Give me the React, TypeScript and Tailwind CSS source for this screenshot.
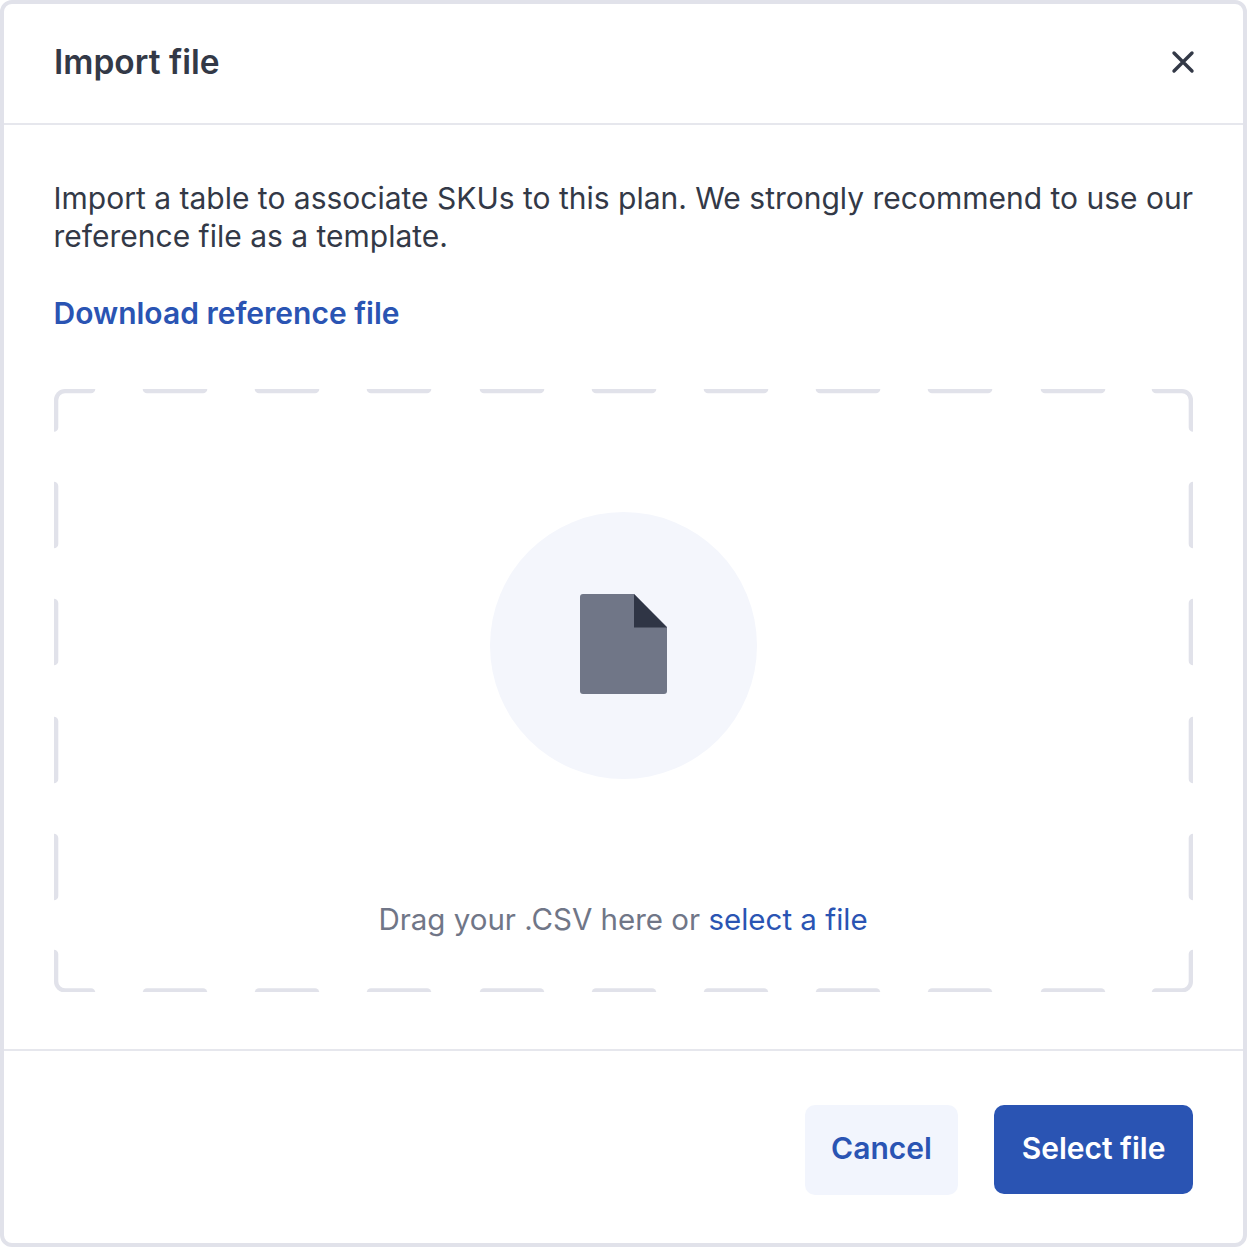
const topDashes = [142, 254, 366, 479, 591, 703, 815, 927, 1040];
const sideDashes = [482, 599, 717, 834];

// Dashed outline of the drop zone. Strokes sit on the edge and the outer half gets clipped,
// which gives the flat outside / rounded inside dash ends of the reference.
function DashedOutline() {
  const w = 1139;
  const h = 603.5;
  return (
    <svg className="absolute inset-0" width={w} height={h} viewBox={`0 0 ${w} ${h}`} fill="none" stroke="#e1e2ea" strokeWidth="8.6" strokeLinecap="round">
      <defs>
        <clipPath id="zone-edge">
          <rect width={w} height={h} rx="11" />
        </clipPath>
      </defs>
      <g clipPath="url(#zone-edge)">
        <path d="M0 38.500V11a11 11 0 0 1 11-11H37" />
        <path d={`M${w} 38.500V11a11 11 0 0 0-11-11H${w - 37}`} />
        <path d={`M0 ${h - 38.5}V${h - 11}a11 11 0 0 0 11 11H37`} />
        <path d={`M${w} ${h - 38.5}V${h - 11}a11 11 0 0 1-11 11H${w - 37}`} />
        {topDashes.map((x) => (
          <g key={x}>
            <line x1={x - 49} y1="0" x2={x + 7} y2="0" />
            <line x1={x - 49} y1={h} x2={x + 7} y2={h} />
          </g>
        ))}
        {sideDashes.map((y) => (
          <g key={y}>
            <line x1="0" y1={y - 385} x2="0" y2={y - 327} />
            <line x1={w} y1={y - 385} x2={w} y2={y - 327} />
          </g>
        ))}
      </g>
    </svg>
  );
}

function FileIcon() {
  return (
    <svg width="88" height="102" viewBox="0 0 88 102">
      <path d="M3 1H54L87 34V98a3 3 0 0 1-3 3H3a3 3 0 0 1-3-3V4a3 3 0 0 1 3-3Z" fill="#707687" />
      <path d="M54 1L87 34.500H54Z" fill="#2f3545" />
    </svg>
  );
}

export default function App() {
  return (
    <div className="w-[1247px] h-[1247px] bg-white border-[4.5px] border-[#e1e2ea] rounded-[12px] flex flex-col text-[#333947] font-['Inter',sans-serif]">
      {/* Header */}
      <div className="h-[120.5px] shrink-0 flex items-center justify-between pl-[50px] pr-[48px] pb-[3px] border-b-[2.5px] border-[#e6e7ed]">
        <h1 className="mt-[2px] text-[33.500px] font-semibold leading-none">Import file</h1>
        <svg width="24" height="24" viewBox="0 0 24 24" fill="none" stroke="#333947" strokeWidth="3.4" strokeLinecap="round">
          <path d="M3 3L21 21M21 3L3 21" />
        </svg>
      </div>

      {/* Body */}
      <div className="h-[926.5px] shrink-0 pl-[49.500px] border-b-[2.5px] border-[#e6e7ed]">
        <p className="mt-[54px] w-[1145px] text-[30px] leading-[38px]">
          Import a table to associate SKUs to this plan. We strongly recommend to use our reference file as a template.
        </p>
        <a className="block mt-[39px] text-[30px] leading-[38px] font-semibold text-[#2a54b3]">Download reference file</a>
        <div className="relative mt-[57.3px] w-[1139px] h-[603.5px] flex flex-col items-center pt-[123px]">
          <DashedOutline />
          <div className="w-[267px] h-[267px] rounded-full bg-[#f4f6fc] flex items-center justify-center">
            <div className="mb-[3px] ml-[2px]">
              <FileIcon />
            </div>
          </div>
          <p className="mt-[121px] text-[29.500px] leading-[38px] text-[#707687]">
            Drag your .CSV here or <span className="text-[#2a54b3]">select a file</span>
          </p>
        </div>
      </div>

      {/* Footer */}
      <div className="flex-1 flex items-start justify-end gap-[36px] pt-[53.500px] pr-[50px]">
        <button className="h-[90px] w-[153px] pb-[2px] rounded-[10px] bg-[#f2f5fd] text-[#2a54b3] text-[30px] font-semibold">Cancel</button>
        <button className="h-[89px] w-[199px] pb-[2px] rounded-[10px] bg-[#2a54b3] text-white text-[30px] font-semibold">Select file</button>
      </div>
    </div>
  );
}
